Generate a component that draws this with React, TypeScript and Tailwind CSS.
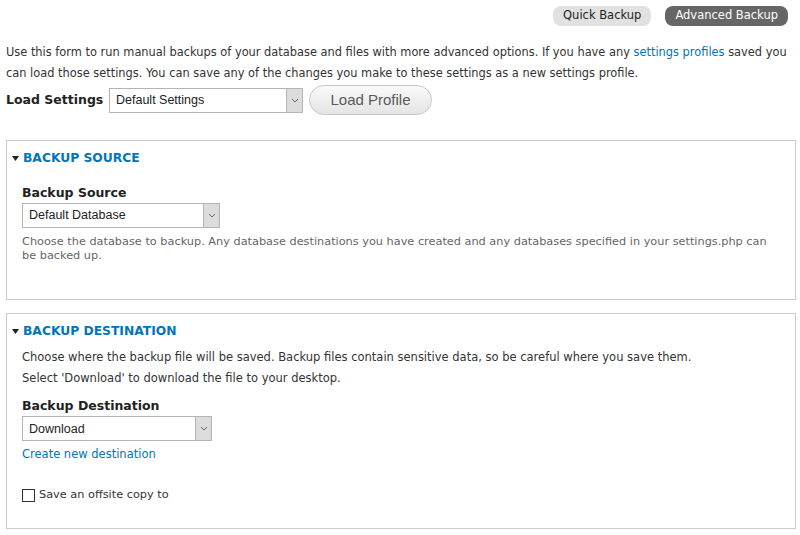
import React from "react";

function FakeSelect({ value, width }: { value: string; width: string }) {
  return (
    <div
      className={`flex h-[25px] items-stretch border border-[#b4b4b4] bg-white ${width}`}
    >
      <div className="flex flex-1 items-center pl-[6px] font-['Liberation_Sans',Arial,sans-serif] text-[12.5px] text-[#222]">
        {value}
      </div>
      <div className="flex w-[16px] items-center justify-center border-l border-[#b4b4b4] bg-[#dcdcdc]">
        <svg width="8" height="5" viewBox="0 0 8 5">
          <path d="M1 1l3 3 3-3" fill="none" stroke="#666" strokeWidth="1" />
        </svg>
      </div>
    </div>
  );
}

function Legend({ text }: { text: string }) {
  return (
    <div className="flex items-center gap-[4px] text-[12.3px] font-bold text-[#0074bd]">
      <svg width="7" height="5" viewBox="0 0 7 5">
        <path d="M0 0h7L3.5 5z" fill="#222" />
      </svg>
      <span>{text}</span>
    </div>
  );
}

export default function App() {
  return (
    <div className="h-[535px] w-[800px] overflow-hidden bg-white font-['DejaVu_Sans',Verdana,sans-serif] text-[11.5px] text-[#333]">
      <div className="flex justify-end gap-[14px] pr-[12px] pt-[6px]">
        <div className="flex h-[20px] items-center rounded-[8px] bg-[#e1e1e1] px-[10px] text-[#222]">
          Quick Backup
        </div>
        <div className="flex h-[20px] items-center rounded-[8px] bg-[#666] px-[10px] text-white">
          Advanced Backup
        </div>
      </div>

      <div className="pl-[6px] pr-[4px] pt-[16px]">
        <p className="text-[11.4px] leading-[21px]">
          Use this form to run manual backups of your database and files with
          more advanced options. If you have any{" "}
          <span className="text-[#0074bd]">settings profiles</span> saved you
          can load those settings. You can save any of the changes you make to
          these settings as a new settings profile.
        </p>
        <div className="mt-[1px] flex items-center">
          <span className="w-[103px] text-[12.5px] font-bold text-[#222]">
            Load Settings
          </span>
          <FakeSelect value="Default Settings" width="w-[194px]" />
          <div className="ml-[6px] flex h-[30px] w-[123px] items-center justify-center rounded-full border border-[#c8c8c8] bg-gradient-to-b from-[#fafafa] to-[#e4e4e4] font-['Liberation_Sans',Arial,sans-serif] text-[15px] text-[#5a5a5a]">
            Load Profile
          </div>
        </div>

        <div className="mt-[25px] w-[790px] border border-[#cccccc] px-[15px] pb-[36px] pt-[8px]">
          <div className="-ml-[10px]">
            <Legend text="BACKUP SOURCE" />
          </div>
          <div className="mt-[17px] text-[12.5px] font-bold text-[#222]">
            Backup Source
          </div>
          <div className="mt-[0px]">
            <FakeSelect value="Default Database" width="w-[198px]" />
          </div>
          <p className="mt-[7px] text-[11.3px] leading-[14px] text-[#666]">
            Choose the database to backup. Any database destinations you have
            created and any databases specified in your settings.php can be
            backed up.
          </p>
        </div>

        <div className="mt-[13px] w-[790px] border border-[#cccccc] px-[15px] pb-[24px] pt-[8px]">
          <div className="-ml-[10px]">
            <Legend text="BACKUP DESTINATION" />
          </div>
          <p className="mt-[6px] leading-[21px]">
            Choose where the backup file will be saved. Backup files contain
            sensitive data, so be careful where you save them.
            <br />
            Select 'Download' to download the file to your desktop.
          </p>
          <div className="mt-[8px] text-[12.5px] font-bold text-[#222]">
            Backup Destination
          </div>
          <div className="mt-[1px]">
            <FakeSelect value="Download" width="w-[190px]" />
          </div>
          <div className="mt-[5px] text-[#0074bd]">Create new destination</div>
          <div className="mt-[23px] flex items-center gap-[4px]">
            <div className="h-[13px] w-[13px] border border-[#333] bg-white" />
            <span className="text-[11.3px]">Save an offsite copy to</span>
          </div>
        </div>
      </div>
    </div>
  );
}
